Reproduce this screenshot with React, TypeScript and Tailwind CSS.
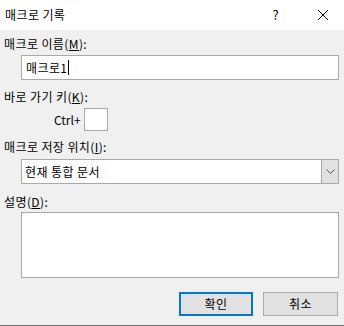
export default function App() {
  const font = { fontFamily: '"Noto Sans CJK KR", "Noto Sans", sans-serif' };
  return (
    <div className="w-[344px] h-[326px] flex flex-col bg-[#f0f0f0] text-[12px] leading-[16px] tracking-[0.4px] text-black overflow-hidden" style={font}>
      {/* title bar */}
      <div className="h-[30px] bg-white flex items-center shrink-0">
        <span className="ml-[5px] text-[12px]">매크로 기록</span>
        <span className="ml-auto mr-[38px] text-[13px]">?</span>
        <svg width="12" height="12" viewBox="0 0 12 12" className="mr-[15px]">
          <path d="M1 1L11 11M11 1L1 11" stroke="#000" strokeWidth="1" />
        </svg>
      </div>

      {/* body */}
      <div className="flex-1 flex flex-col pl-[4px] pr-[5px]">
        <div className="mt-[6px]">
          매크로 이름(<span className="underline">M</span>):
        </div>
        <div className="mt-[3px] ml-[17px] h-[25px] bg-white border border-[#a9a9a9] flex items-center pl-[4px]">
          <span>매크로1</span>
          <span className="w-px h-[15px] bg-black ml-px" />
        </div>

        <div className="mt-[9px]">
          바로 가기 키(<span className="underline">K</span>):
        </div>
        <div className="mt-[3px] flex items-center">
          <span className="ml-[50px] w-[26px] text-right tracking-normal">Ctrl+</span>
          <div className="ml-[4px] w-[24px] h-[23px] bg-white border border-[#a9a9a9]" />
        </div>

        <div className="mt-[8px]">
          매크로 저장 위치(<span className="underline">I</span>):
        </div>
        <div className="mt-[4px] ml-[17px] h-[25px] bg-white border border-[#a9a9a9] flex items-stretch">
          <span className="flex-1 pl-[3px] flex items-center">현재 통합 문서</span>
          <div className="w-[17px] bg-[#e1e1e1] border-l border-[#a9a9a9] flex items-center justify-center">
            <svg width="9" height="5" viewBox="0 0 9 5">
              <path d="M0.5 0.5L4.5 4.5L8.5 0.5" stroke="#555" strokeWidth="1" fill="none" />
            </svg>
          </div>
        </div>

        <div className="mt-[10px]">
          설명(<span className="underline">D</span>):
        </div>
        <div className="mt-[2px] ml-[17px] h-[66px] bg-white border border-[#a9a9a9]" />

        <div className="mt-[14px] flex justify-end gap-[10px] pr-px">
          <button className="w-[74px] h-[24px] bg-[#e1e1e1] border-2 border-[#0078d7] flex items-center justify-center">
            확인
          </button>
          <button className="w-[75px] h-[24px] bg-[#e1e1e1] border border-[#adadad] flex items-center justify-center">
            취소
          </button>
        </div>
      </div>

      <div className="h-px bg-[#6e6e6e] shrink-0" />
    </div>
  );
}
